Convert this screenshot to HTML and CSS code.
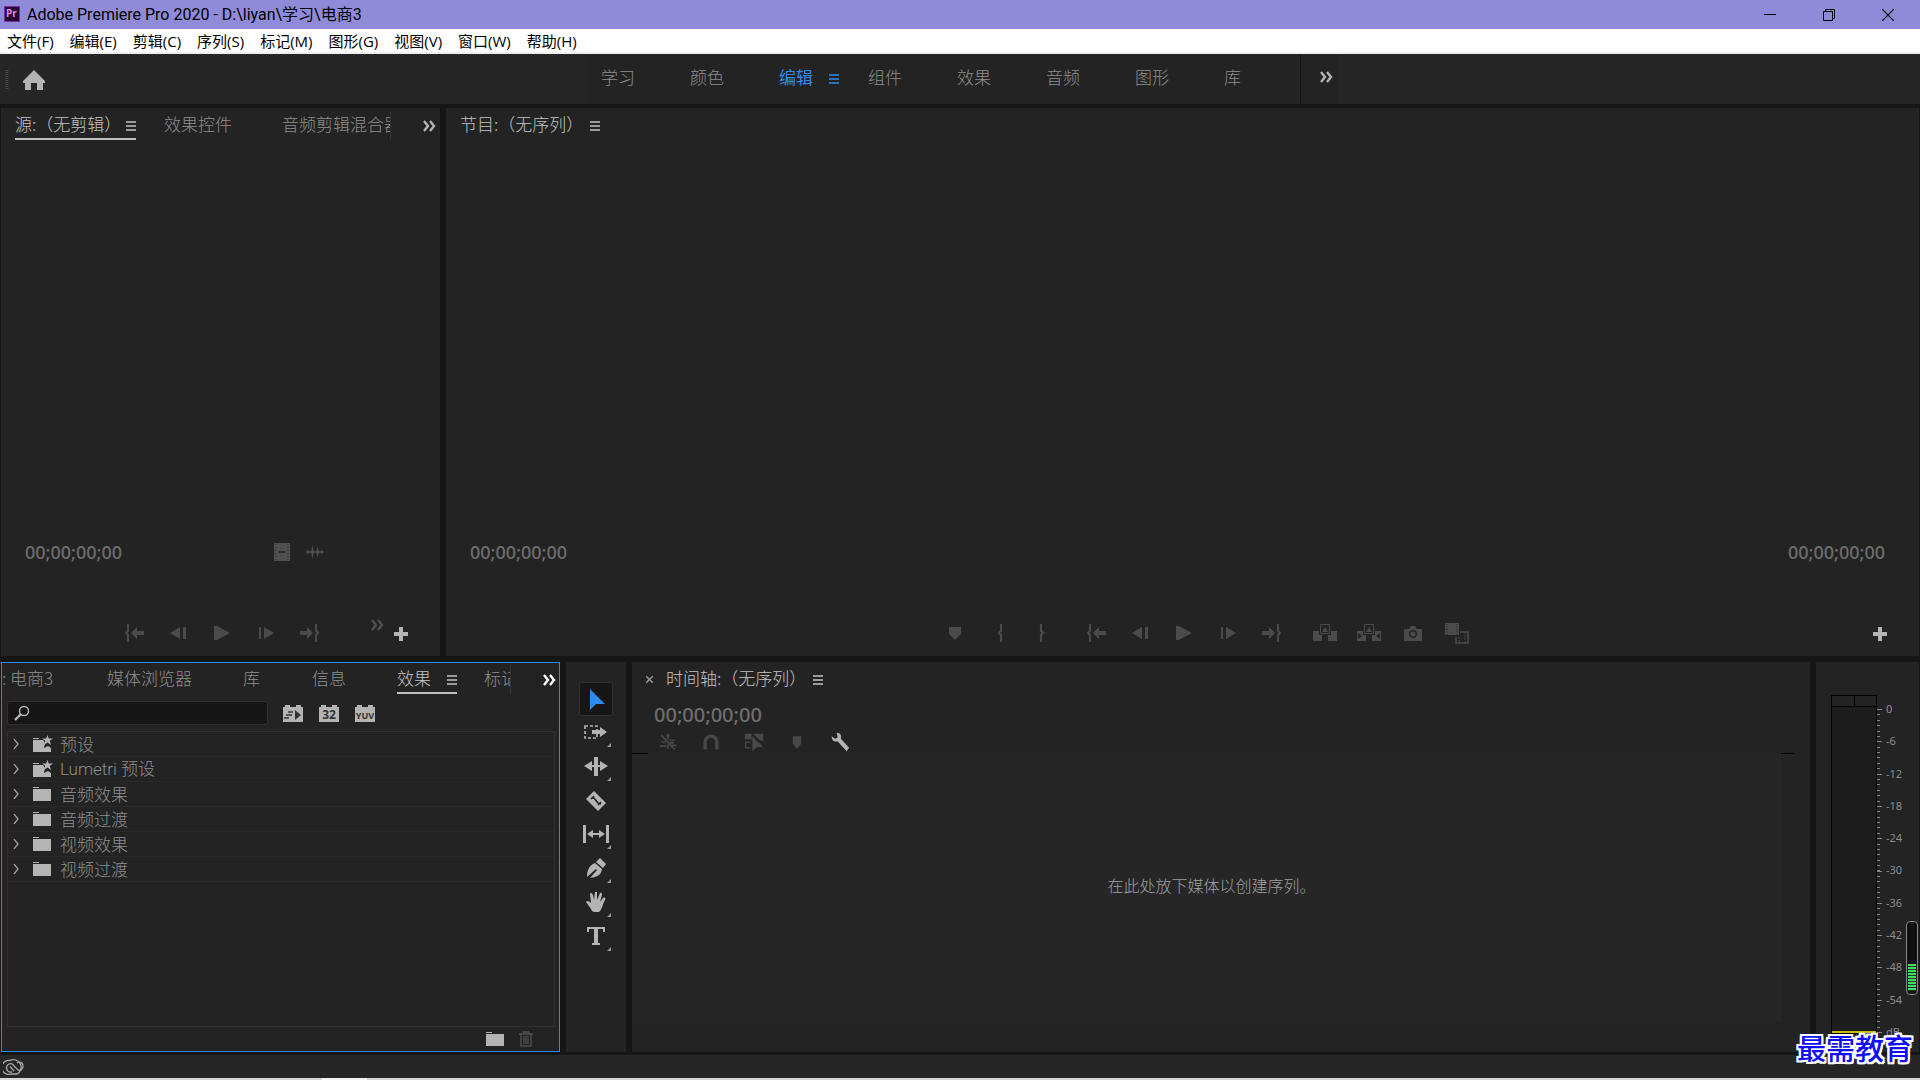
FILE: index.html
```html
<!DOCTYPE html>
<html lang="zh-CN">
<head>
<meta charset="utf-8">
<title>Adobe Premiere Pro 2020</title>
<link rel="stylesheet" href="styles.css">
</head>
<body>
<svg class="sprite" aria-hidden="true">
  <symbol id="menu" viewBox="0 0 10 10"><path d="M0 1h10M0 5h10M0 9h10" stroke="currentColor" stroke-width="1.4"/></symbol>
  <symbol id="more" viewBox="0 0 14 12"><path d="M2 1l4 5-4 5M8 1l4 5-4 5" fill="none" stroke="currentColor" stroke-width="2.4"/></symbol>
  <symbol id="plus" viewBox="0 0 24 24"><path d="M10 6h4v5h5v4h-5v5h-4v-5H5v-4h5z" fill="currentColor"/></symbol>
  <symbol id="go-in" viewBox="0 0 24 24"><path d="M7 4H6v6l-2 2 2 2v6h1" fill="none" stroke="currentColor" stroke-width="2"/><path d="M9 12l6-6v4h7v4h-7v4z" fill="currentColor"/></symbol>
  <symbol id="go-out" viewBox="0 0 24 24"><path d="M17 4h1v6l2 2-2 2v6h-1" fill="none" stroke="currentColor" stroke-width="2"/><path d="M15 12L9 6v4H2v4h7v4z" fill="currentColor"/></symbol>
  <symbol id="step-back" viewBox="0 0 24 24"><path d="M4 12l10-6v12zM17 6h3v12h-3z" fill="currentColor"/></symbol>
  <symbol id="step-next" viewBox="0 0 24 24"><path d="M20 12L10 6v12zM5 6h2v12H5z" fill="currentColor"/></symbol>
  <symbol id="play" viewBox="0 0 24 24"><path d="M4 5h3l13 7-13 7H4z" fill="currentColor"/></symbol>
  <symbol id="marker" viewBox="0 0 24 24"><path d="M6 6h12v7l-6 6-6-6z" fill="currentColor"/></symbol>
  <symbol id="brace-l" viewBox="0 0 24 24"><path d="M15 4h-1v6l-2 2 2 2v6h1" fill="none" stroke="currentColor" stroke-width="2.200"/></symbol>
  <symbol id="brace-r" viewBox="0 0 24 24"><path d="M9 4h1v6l2 2-2 2v6H9" fill="none" stroke="currentColor" stroke-width="2.200"/></symbol>
  <symbol id="lift" viewBox="0 0 24 24"><path d="M0 10h6v4h3v6H0zM18 10h6v10h-9v-6h3z" fill="currentColor"/><path d="M7.500 3.500h9v9h-9z" fill="none" stroke="currentColor"/><path d="M12 6l3 5H9z" fill="currentColor"/></symbol>
  <symbol id="extract" viewBox="0 0 24 24"><path fill-rule="evenodd" d="M0 10h6v4h3v6H0zM1 12v6l4-3zM18 10h6v10h-9v-6h3zM23 12v6l-4-3z" fill="currentColor"/><path d="M7.500 3.500h9v9h-9z" fill="none" stroke="currentColor"/><path d="M12 6l3 5H9z" fill="currentColor"/></symbol>
  <symbol id="camera" viewBox="0 0 24 24"><path fill-rule="evenodd" d="M3 8h5l2-3h4l2 3h5v12H3zM12 9a4 4 0 1 0 0 8 4 4 0 0 0 0-8zm0 1.500a2.500 2.500 0 1 1 0 5 2.500 2.500 0 0 1 0-5z" fill="currentColor"/></symbol>
  <symbol id="compare" viewBox="0 0 24 24"><path d="M0 2h14v12H0z" fill="currentColor"/><path d="M2 3v11M12 3v11" stroke="#232323" stroke-dasharray="1 1.500"/><path d="M15 11h8v11H11v-6" fill="none" stroke="currentColor" stroke-width="1.500"/><path d="M14 16v6M20 11v11" stroke="currentColor" stroke-dasharray="2 1"/></symbol>
  <symbol id="film" viewBox="0 0 16 18"><path d="M0 0h16v18H0z" fill="currentColor"/><path d="M2 1v17M14 1v17" stroke="#2b2b2b" stroke-dasharray="1 2"/><path d="M5 9h6" stroke="#222" stroke-width="1.500"/></symbol>
  <symbol id="wave" viewBox="0 0 18 14"><path d="M0 7h18" stroke="currentColor" stroke-width="1.500"/><path d="M1.500 3l1.500 4-1.500 4M6.500 0L8 7l-1.500 7L5 7zM11.500 2L13 7l-1.500 5L10 7zM15 4l2 3-2 3z" fill="currentColor"/></symbol>
  <symbol id="folder" viewBox="0 0 18 16"><path d="M0 1h6v1H0zM0 3h18v12H0z" fill="currentColor"/></symbol>
  <symbol id="preset" viewBox="0 0 20 18"><path d="M0 3h6v1H0zM0 5h10l2 3-1 5 4-2 3 2v4H0z" fill="currentColor"/><path d="M14.500 0l1.300 3.500H20l-3.200 2.300L18 10l-3.500-2.400L11 10l1.200-4.200L9 3.500h4.200z" fill="currentColor"/></symbol>
  <symbol id="chev" viewBox="0 0 6 10"><path d="M1 0l4 5-4 5" fill="none" stroke="currentColor" stroke-width="1.300"/></symbol>
  <symbol id="brick" viewBox="0 0 20 17"><path d="M0 2h2V0h5v2h6V0h5v2h2v15H0z" fill="currentColor"/></symbol>
</svg>

<header class="titlebar">
  <svg class="logo" viewBox="0 0 16 16"><rect x=".5" y=".5" width="15" height="15" fill="#2a0634" stroke="#7b2f9a"/><text class="logo-text" x="2" y="11">Pr</text></svg>
  <h1 class="title">Adobe Premiere Pro 2020 - D:\liyan\学习\电商3</h1>
  <div class="window-buttons">
    <button aria-label="最小化"><svg width="12" height="12"><path d="M0 5.500h12" stroke="#000"/></svg></button>
    <button aria-label="还原"><svg width="12" height="12"><path d="M.5 2.500h9v9h-9zM2.500 2.500v-2h9v9h-2" fill="none" stroke="#000"/></svg></button>
    <button aria-label="关闭"><svg width="12" height="12"><path d="M0 0l12 12M12 0L0 12" stroke="#000" stroke-width="1.200"/></svg></button>
  </div>
</header>
<nav class="menubar">
  <button>文件(F)</button><button>编辑(E)</button><button>剪辑(C)</button><button>序列(S)</button><button>标记(M)</button><button>图形(G)</button><button>视图(V)</button><button>窗口(W)</button><button>帮助(H)</button>
</nav>

<div class="workspace-bar">
  <div class="home">
    <svg class="grip" width="4" height="20"><path d="M2 0v20" stroke="#4a4a4a" stroke-width="3" stroke-dasharray="1 1"/></svg>
    <button aria-label="主页"><svg width="24" height="22"><path d="M12 1l11 11v2h-2v7h-6v-7H9v7H3v-7H1v-2z" fill="#b4b4b4"/></svg></button>
  </div>
  <nav class="workspaces">
    <button>学习</button><button>颜色</button><button class="current">编辑<svg class="burger"><use href="#menu"/></svg></button><button>组件</button><button>效果</button><button>音频</button><button>图形</button><button>库</button>
    <button class="overflow" aria-label="更多工作区"><svg class="more"><use href="#more"/></svg></button>
  </nav>
</div>

<main class="work">
  <div class="row upper">
    <section class="panel source">
      <div class="tabs">
        <div class="tab-strip source-strip">
          <button class="tab active">源:（无剪辑）<svg class="burger"><use href="#menu"/></svg></button>
          <button class="tab">效果控件</button>
          <button class="tab last">音频剪辑混合器</button>
        </div>
        <button class="tab-more" aria-label="更多标签"><svg class="more"><use href="#more"/></svg></button>
      </div>
      <div class="viewer"></div>
      <div class="times">
        <span class="timecode">00;00;00;00</span>
        <span class="drag-icons"><svg width="16" height="18"><use href="#film"/></svg><svg width="18" height="14"><use href="#wave"/></svg></span>
      </div>
      <div class="transport">
        <div class="buttons source-buttons">
          <button aria-label="转到入点"><svg><use href="#go-in"/></svg></button>
          <button aria-label="后退一帧"><svg><use href="#step-back"/></svg></button>
          <button aria-label="播放"><svg><use href="#play"/></svg></button>
          <button aria-label="前进一帧"><svg><use href="#step-next"/></svg></button>
          <button aria-label="转到出点"><svg><use href="#go-out"/></svg></button>
        </div>
        <svg class="more dim"><use href="#more"/></svg>
        <button class="add" aria-label="按钮编辑器"><svg><use href="#plus"/></svg></button>
      </div>
    </section>
    <section class="panel program">
      <div class="tabs">
        <button class="tab lit">节目:（无序列）<svg class="burger"><use href="#menu"/></svg></button>
      </div>
      <div class="viewer"></div>
      <div class="times"><span class="timecode">00;00;00;00</span><span class="timecode">00;00;00;00</span></div>
      <div class="transport">
        <div class="buttons program-buttons">
          <button aria-label="添加标记"><svg><use href="#marker"/></svg></button>
          <button aria-label="标记入点"><svg><use href="#brace-l"/></svg></button>
          <button aria-label="标记出点"><svg><use href="#brace-r"/></svg></button>
          <button class="group" aria-label="转到入点"><svg><use href="#go-in"/></svg></button>
          <button aria-label="后退一帧"><svg><use href="#step-back"/></svg></button>
          <button aria-label="播放"><svg><use href="#play"/></svg></button>
          <button aria-label="前进一帧"><svg><use href="#step-next"/></svg></button>
          <button aria-label="转到出点"><svg><use href="#go-out"/></svg></button>
          <button class="group" aria-label="提升"><svg><use href="#lift"/></svg></button>
          <button aria-label="提取"><svg><use href="#extract"/></svg></button>
          <button aria-label="导出帧"><svg><use href="#camera"/></svg></button>
          <button aria-label="比较视图"><svg><use href="#compare"/></svg></button>
        </div>
        <button class="add" aria-label="按钮编辑器"><svg><use href="#plus"/></svg></button>
      </div>
    </section>
  </div>

  <div class="row lower">
    <section class="panel effects">
      <div class="tabs">
        <div class="tab-strip effects-strip">
          <button class="tab">: 电商3</button>
          <button class="tab">媒体浏览器</button>
          <button class="tab">库</button>
          <button class="tab">信息</button>
          <button class="tab active">效果<svg class="burger"><use href="#menu"/></svg></button>
          <button class="tab last">标记</button>
        </div>
        <button class="tab-more bright" aria-label="更多标签"><svg class="more"><use href="#more"/></svg></button>
      </div>
      <div class="search-row">
        <label class="search">
          <svg width="16" height="16"><circle cx="10" cy="6" r="4.500" fill="none" stroke="#b4b4b4" stroke-width="1.500"/><path d="M7 9l-6 6" stroke="#b4b4b4" stroke-width="2.400"/></svg>
          <input type="text" aria-label="搜索效果">
        </label>
        <button class="badge" aria-label="加速效果"><svg viewBox="0 0 20 17"><use href="#brick"/><path d="M12 5l6 5-6 5z" fill="#333"/><path d="M5 7h5M3 10h6M1 13h5" stroke="#333" stroke-width="1.300"/></svg></button>
        <button class="badge" aria-label="32 位颜色"><svg viewBox="0 0 20 17"><use href="#brick"/><text class="badge-text" x="10" y="14">32</text></svg></button>
        <button class="badge" aria-label="YUV 效果"><svg viewBox="0 0 20 17"><use href="#brick"/><text class="badge-text small" x="10" y="14">YUV</text></svg></button>
      </div>
      <ul class="tree">
        <li><button><svg class="chev"><use href="#chev"/></svg><svg class="preset"><use href="#preset"/></svg>预设</button></li>
        <li><button><svg class="chev"><use href="#chev"/></svg><svg class="preset"><use href="#preset"/></svg><span class="latin">Lumetri 预设</span></button></li>
        <li><button><svg class="chev"><use href="#chev"/></svg><svg class="folder"><use href="#folder"/></svg>音频效果</button></li>
        <li><button><svg class="chev"><use href="#chev"/></svg><svg class="folder"><use href="#folder"/></svg>音频过渡</button></li>
        <li><button><svg class="chev"><use href="#chev"/></svg><svg class="folder"><use href="#folder"/></svg>视频效果</button></li>
        <li><button><svg class="chev"><use href="#chev"/></svg><svg class="folder"><use href="#folder"/></svg>视频过渡</button></li>
      </ul>
      <div class="panel-foot">
        <button aria-label="新建素材箱"><svg class="folder"><use href="#folder"/></svg></button>
        <button aria-label="删除"><svg width="14" height="16"><path d="M0 3h14M4.500 3V1h5v2M2 3v12h10V3M5 5v8M7 5v8M9 5v8" fill="none" stroke="#505050" stroke-width="1.300"/></svg></button>
      </div>
    </section>

    <section class="panel tools">
      <button class="tool selected" aria-label="选择工具"><svg viewBox="0 0 28 28"><path d="M8 4l15 15h-9l-6 6z" fill="#2d8ceb"/></svg></button>
      <button class="tool more-tools" aria-label="轨道选择工具"><svg viewBox="0 0 28 28"><path d="M3 7h12v12H3z" fill="none" stroke="currentColor" stroke-width="1.600" stroke-dasharray="3 2"/><path d="M10 11h8V8l7 5-7 5v-3h-8z" fill="currentColor"/></svg></button>
      <button class="tool more-tools" aria-label="波纹编辑工具"><svg viewBox="0 0 28 28"><path d="M2 13l8-5v4h2V4h4v8h2V8l8 5-8 5v-4h-2v9h-4v-9h-2v4z" fill="currentColor"/></svg></button>
      <button class="tool" aria-label="剃刀工具"><svg viewBox="0 0 28 28"><path d="M4 12l8-8 12 12-8 8z" fill="currentColor"/><path d="M10 11l2 0 4 5 3 1M12 9l-3 3M19 15l-3 3" stroke="#232323" stroke-width="1.500" fill="none"/></svg></button>
      <button class="tool more-tools" aria-label="外滑工具"><svg viewBox="0 0 28 28"><path d="M1 4h3v18H1zM24 4h3v18h-3zM5 13l6-4v3h6V9l6 4-6 4v-3h-6v3z" fill="currentColor"/></svg></button>
      <button class="tool more-tools" aria-label="钢笔工具"><svg viewBox="0 0 28 28"><path d="M14 7l4-4 6 6-3 4zM13 8l7 6c-1 7-6 8-12 9l7-8-1-1-9 8c0-6 2-12 8-14z" fill="currentColor"/></svg></button>
      <button class="tool more-tools" aria-label="手形工具"><svg viewBox="0 0 28 28"><path d="M10 22c-2-4-4-6-6-9 1-2 3-1 5 1L8 5c1-2 2-1 3 1l1 5 1-8h2v8l3-7c2-1 2 1 2 2l-2 7 3-4c2-1 3 0 2 2-2 3-3 10-6 12h-5z" fill="currentColor"/></svg></button>
      <button class="tool more-tools" aria-label="文字工具"><svg viewBox="0 0 28 28"><path d="M5 4h18v5h-2V6h-5v14h2v2h-8v-2h2V6H7v3H5z" fill="currentColor"/></svg></button>
    </section>

    <section class="panel timeline">
      <div class="tabs">
        <button class="close" aria-label="关闭标签"><svg width="7" height="7"><path d="M0 0l7 7M7 0L0 7" stroke="#999" stroke-width="1.400"/></svg></button>
        <button class="tab lit">时间轴:（无序列）<svg class="burger"><use href="#menu"/></svg></button>
      </div>
      <span class="timecode large">00;00;00;00</span>
      <div class="timeline-tools">
        <button aria-label="嵌套"><svg viewBox="0 0 24 24"><path d="M12 3v6M7 7l2 2M4 12h5M2 17h8M14 10h6M14 13h5M15 16h7M12 15v5M4 4l16 17" stroke="currentColor" stroke-width="2"/><circle cx="12" cy="4" r="2" fill="currentColor"/></svg></button>
        <button aria-label="对齐"><svg viewBox="0 0 24 24"><path d="M5 21v-9a7 7 0 0 1 14 0v9" fill="none" stroke="currentColor" stroke-width="4"/></svg></button>
        <button aria-label="链接选择项"><svg viewBox="0 0 24 24"><path d="M1 2h8v7H1zM11 2h12v9l-4-1-8-8zM10 5l13 13h-7l-6 5z" fill="currentColor"/><path d="M8 12H2v7h6" fill="none" stroke="currentColor" stroke-width="1.500"/></svg></button>
        <button aria-label="添加标记"><svg viewBox="0 0 24 24"><path d="M7 5h10v9l-5 6-5-6z" fill="currentColor"/></svg></button>
        <button class="wrench" aria-label="时间轴显示设置"><svg viewBox="0 0 24 24"><path d="M8 1c5 0 6 4 5 7l10 11-3 4-11-12c-4 1-7-1-7-6l4 3 3-1V5z" fill="currentColor"/></svg></button>
      </div>
      <div class="track-area">
        <div class="drop-zone"><p>在此处放下媒体以创建序列。</p></div>
        <div class="track-side"></div>
      </div>
    </section>

    <section class="panel meters">
      <div class="meter"><div class="clip"><i></i><i></i></div><div class="level"></div></div>
      <div class="ticks"><i></i><i></i></div>
      <ol class="scale"><li>0</li><li>-6</li><li>-12</li><li>-18</li><li>-24</li><li>-30</li><li>-36</li><li>-42</li><li>-48</li><li>-54</li><li>dB</li></ol>
      <div class="gauge"><i></i></div>
    </section>
  </div>
</main>

<footer class="status">
  <svg width="22" height="18" viewBox="0 0 22 18"><g fill="none" stroke="#a8a8a8" stroke-width="1.300"><path d="M7 3.500a7 7 0 1 0 1 13.500h6a7.500 7.500 0 1 0-7-13.500z"/><path d="M11 14L7 9.500M9 15c-6 1-7-6-3-8 2-1 4 0 5 2l4 4c3 1 5-1 5-4s-3-5-6-3"/></g></svg>
</footer>
<div class="taskbar-edge"><i></i></div>
<div class="watermark">最需教育</div>
</body>
</html>
```
FILE: styles.css
```css
* { box-sizing: border-box; }
body {
  margin: 0;
  height: 100vh;
  display: flex;
  flex-direction: column;
  overflow: hidden;
  background: #161616;
  color: #8e8e8e;
  font: 300 17px/24px "Noto Sans CJK SC", sans-serif;
}
button {
  border: 0;
  padding: 0;
  background: none;
  color: inherit;
  font: inherit;
  white-space: nowrap;
}
svg { display: block; flex: none; }
.sprite { position: absolute; width: 0; height: 0; }
.burger { width: 10px; height: 10px; }
.more { width: 14px; height: 12px; color: #b4b4b4; }

.titlebar {
  display: flex;
  align-items: center;
  height: 29px;
  flex: none;
  padding-left: 4px;
  background: #8f8bd8;
  color: #000;
}
.logo { width: 16px; height: 16px; margin-bottom: 2px; }
.logo-text { font: 700 10px "Noto Sans", sans-serif; fill: #d88cf0; }
.title {
  flex: 1;
  margin: 0 0 0 7px;
  font: 400 16px/24px Roboto, "Noto Sans CJK SC", sans-serif;
}
.window-buttons { display: flex; margin-right: 3px; }
.window-buttons button { width: 59px; height: 28px; display: grid; place-items: center; }

.menubar {
  display: flex;
  gap: 16px;
  height: 25px;
  flex: none;
  padding-left: 7px;
  background: #fff;
  border-bottom: 2px solid #f0f0f0;
  color: #000;
  font: 400 15px/24px "Open Sans", "Noto Sans CJK SC", sans-serif;
}

.workspace-bar {
  display: flex;
  height: 50px;
  flex: none;
  background: #262626;
}
.home { display: flex; align-items: center; gap: 13px; width: 588px; padding: 2px 0 0 5px; }
.workspaces { display: flex; background: #232323; }
.workspaces button { display: flex; align-items: center; gap: 16px; width: 89px; padding: 0 0 4px 13px; }
.workspaces .current { color: #2d8ceb; font-weight: 400; }
.workspaces .current .burger { margin-top: 4px; }
.workspaces .overflow { width: 38px; padding-left: 18px; border-left: 1px solid #161616; }

.work { display: flex; flex-direction: column; flex: 1; gap: 6px; padding: 4px 1px 3px; min-height: 0; }
.row { display: flex; gap: 6px; min-height: 0; }
.upper { flex: 548; }
.lower { flex: 390; }
.panel { display: flex; flex-direction: column; background: #232323; min-width: 0; }
.source { width: 439px; }
.program { flex: 1; }

.tabs { display: flex; align-items: center; height: 35px; flex: none; }
.tab { display: flex; align-items: center; flex: none; height: 28px; padding-bottom: 2px; border-bottom: 2px solid transparent; }
.tab .burger { margin-top: 4px; }
.tab.active { color: #c4c4c4; border-color: #c0c0c0; }
.tab.lit { color: #c4c4c4; }
.tab-strip { display: flex; overflow: hidden; border-right: 1px solid #343434; }
.source-strip { width: 390px; padding-left: 14px; }
.source-strip .active { width: 121px; margin-right: 28px; justify-content: space-between; }
.source-strip .last { margin-left: 50px; }
.tab-more { margin-left: 31px; }
.bright .more { color: #fff; }
.program .tabs { padding-left: 14px; }
.lit { gap: 7px; }

.viewer { flex: 1; }
.times { display: flex; justify-content: space-between; align-items: center; height: 30px; margin-bottom: 43px; padding: 0 34px 0 24px; }
.timecode { font: 500 18px/30px "Noto Sans", sans-serif; color: #6e6e6e; }
.drag-icons { display: flex; align-items: center; gap: 16px; margin-right: 82px; color: #505050; }
.transport { display: flex; align-items: center; height: 46px; color: #4b4b4b; }
.transport button svg { width: 24px; height: 24px; }
.buttons { display: flex; }
.buttons button { width: 44px; display: grid; place-items: center; }
.source-buttons { padding-left: 111px; }
.dim { color: #505050; margin: 0 5px 16px 38px; }
.add { color: #b4b4b4; }
.program-buttons { flex: 1; justify-content: center; padding-left: 97px; }
.program-buttons .group { margin-left: 9px; }
.program .add { margin-right: 27px; }

.effects { width: 559px; border: 1px solid #2d8ceb; }
.effects-strip { width: 509px; }
.effects-strip .tab:nth-child(2) { margin-left: 54px; }
.effects-strip .tab:nth-child(3) { margin-left: 51px; }
.effects-strip .tab:nth-child(4) { margin-left: 52px; }
.effects-strip .active { width: 60px; margin-left: 51px; justify-content: space-between; }
.effects-strip .last { margin-left: 27px; }
.effects .tabs { height: 34px; }
.search-row { display: flex; align-items: center; height: 34px; padding: 0 0 2px 5px; }
.search {
  display: flex;
  align-items: center;
  width: 261px;
  height: 24px;
  margin-right: 15px;
  padding-left: 6px;
  background: #161616;
  border: 1px solid #303030;
  border-radius: 3px;
}
.search input { flex: 1; min-width: 0; border: 0; outline: 0; background: none; color: #b4b4b4; }
.badge { width: 20px; height: 17px; margin-right: 16px; color: #b4b4b4; }
.badge-text { font: 700 12px "Noto Sans", sans-serif; fill: #333; text-anchor: middle; }
.badge-text.small { font-size: 9px; }
.tree { flex: 1; margin: 0 4px 0 5px; padding: 0; border: 1px solid #303030; list-style: none; }
.tree li { height: 25px; border-bottom: 1px solid #2a2a2a; }
.tree button { display: flex; align-items: center; width: 100%; height: 24px; padding-left: 5px; }
.latin { font-family: Roboto, "Noto Sans CJK SC", sans-serif; }
.chev { width: 6px; height: 10px; margin-right: 14px; color: #a0a0a0; }
.folder { width: 18px; height: 16px; margin-right: 9px; color: #b4b4b4; }
.preset { width: 20px; height: 18px; margin-right: 7px; color: #b4b4b4; }
.panel-foot { display: flex; justify-content: flex-end; align-items: center; height: 24px; padding-right: 26px; gap: 6px; }

.tools { width: 60px; align-items: center; padding-top: 20px; }
.tool { position: relative; display: grid; place-items: center; width: 34px; height: 34px; flex: none; color: #b4b4b4; }
.tool svg { width: 28px; height: 28px; }
.selected { background: #161616; border: 1px solid #303030; border-radius: 3px; }
.more-tools::after { content: ""; position: absolute; right: 2px; bottom: 3px; border: 2px solid #999; border-top-color: transparent; border-left-color: transparent; }

.timeline { flex: 1; }
.timeline .tabs { padding-left: 14px; gap: 13px; }
.timecode.large { margin-left: 22px; font-size: 20px; line-height: 36px; }
.timeline-tools { display: flex; gap: 19px; padding: 0 0 2px 24px; height: 20px; align-items: center; color: #484848; }
.timeline-tools svg { width: 24px; height: 20px; }
.timeline-tools .wrench { color: #b4b4b4; }
.track-area { display: flex; flex: 1; margin-bottom: 30px; background: linear-gradient(#000, #000) 0 0 / 16px 1px no-repeat; }
.drop-zone { flex: 1; display: grid; place-items: center; margin-top: 1px; padding: 0 0 6px 10px; background: #262626; font-size: 16px; color: #a0a0a0; }
.track-side { width: 29px; background: linear-gradient(#000, #000) 0 0 / 13px 1px no-repeat; }
.drop-zone p { margin: 0; }

.meters { position: relative; flex-direction: row; width: 103px; padding: 33px 0 18px 15px; }
.meter { display: flex; flex-direction: column; width: 46px; border: 1px solid #000; background: #1d1d1d; }
.clip { display: flex; height: 11px; border-bottom: 1px solid #000; background: #232323; }
.clip i { flex: 1; }
.clip i + i { border-left: 1px solid #000; }
.level { flex: 1; border-bottom: 2px solid #c8b90a; }
.ticks { position: relative; width: 5px; margin: 14px 4px 1px 0; }
.ticks i { position: absolute; inset: 0 2px 0 0; background: repeating-linear-gradient(#888 0 1px, transparent 1px calc((100% - 1px) / 60)); }
.ticks i + i { inset: 0; background: repeating-linear-gradient(#888 0 1px, transparent 1px calc((100% - 1px) / 10)); }
.scale { display: flex; flex-direction: column; justify-content: space-between; margin: 8px 0 -4px; padding: 0; list-style: none; font: 400 11px/12px "Noto Sans", sans-serif; }
.gauge { position: absolute; right: 1px; bottom: 57px; display: flex; align-items: flex-end; width: 12px; height: 74px; padding: 1px; border: 1px solid #888; border-radius: 4px; background: #101010; }
.gauge i { width: 100%; height: 27px; margin-bottom: 2px; background: repeating-linear-gradient(#46d767 0 2px, #14401e 2px 3px); }

.status { display: flex; align-items: center; height: 23px; flex: none; padding: 0 0 2px 3px; background: #262626; }
.taskbar-edge { display: flex; height: 2px; flex: none; padding-left: 322px; background: #d8d8d8; }
.taskbar-edge i { width: 45px; background: #f4f4f4; }
.watermark {
  position: absolute;
  right: 7px;
  bottom: 15px;
  color: #1010f0;
  font: 500 29px/36px "Noto Sans CJK SC", sans-serif;
  text-shadow: 2px 0 #fff, -2px 0 #fff, 0 2px #fff, 0 -2px #fff, 2px 2px #fff, -2px -2px #fff, 2px -2px #fff, -2px 2px #fff;
}
```
